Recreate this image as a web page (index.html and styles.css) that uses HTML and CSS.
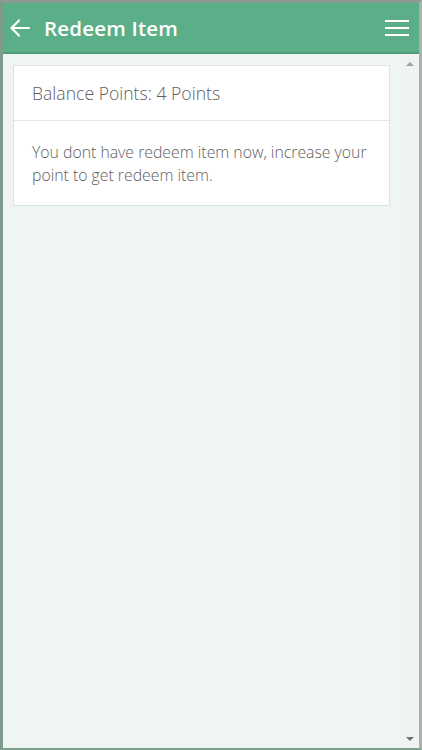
FILE: index.html
```html
<!DOCTYPE html>
<html>
<head>
<meta charset="utf-8">
<link rel="stylesheet" href="styles.css">
</head>
<body>
<div class="frame">
  <header class="topbar">
    <div class="left">
      <svg class="back" width="22" height="20" viewBox="0 0 22 20"><path d="M20 10H3M10 2.5L2.5 10L10 17.5" fill="none" stroke="#fff" stroke-width="2.2" stroke-linecap="round" stroke-linejoin="round"/></svg>
      <h1 class="title">Redeem Item</h1>
    </div>
    <svg class="menu" width="24" height="18" viewBox="0 0 24 18"><path d="M0 2h24M0 9h24M0 16h24" stroke="#fff" stroke-width="2.2"/></svg>
  </header>
  <div class="body">
    <main class="content">
      <section class="card">
        <div class="row head">Balance Points: 4 Points</div>
        <div class="row msg">You dont have redeem item now, increase your point to get redeem item.</div>
      </section>
    </main>
    <div class="scrollbar">
      <span class="arrow up"></span>
      <span class="arrow down"></span>
    </div>
  </div>
</div>
</body>
</html>
```
FILE: styles.css
```css
html, body { margin: 0; padding: 0; }
body { width: 422px; height: 750px; overflow: hidden; background: #7e9a8c; font-family: "Open Sans", "Noto Sans", sans-serif; }
.frame { box-sizing: border-box; width: 422px; height: 750px; border-top: 3px solid #8c9c94; border-left: 3px solid #7d9a8b; border-right: 3px solid #a9b3ae; border-bottom: 2px solid #7aa08d; display: flex; flex-direction: column; background: #eef5f3; }
.topbar { height: 49px; background: #5aaf88; border-bottom: 2px solid #4f9a78; display: flex; align-items: center; justify-content: space-between; padding: 0 5px 0 6px; flex-shrink: 0; }
.left { display: flex; align-items: center; gap: 13px; }
.back { display: block; }
.title { margin: 0; color: #fff; font-size: 20.5px; font-weight: 600; letter-spacing: 0.2px; }
.menu { display: block; margin-right: 5px; }
.body { flex: 1; display: flex; min-height: 0; }
.content { flex: 1; padding: 11px 11px 0 10px; }
.card { background: #fff; border: 1px solid #dde3e0; }
.row { padding: 0 18px; color: #5e5e5e; font-weight: 300; }
.head { height: 54px; display: flex; align-items: center; font-size: 17.6px; border-bottom: 1px solid #e2e6e4; }
.msg { padding-top: 20px; padding-bottom: 18px; font-size: 15.8px; line-height: 23px; }
.scrollbar { width: 18px; background: #f1f3f2; position: relative; }
.arrow { position: absolute; left: 5px; width: 0; height: 0; border-left: 4px solid transparent; border-right: 4px solid transparent; }
.up { top: 8px; border-bottom: 4px solid #a0a0a0; }
.down { bottom: 7px; border-top: 4px solid #707070; }
```
